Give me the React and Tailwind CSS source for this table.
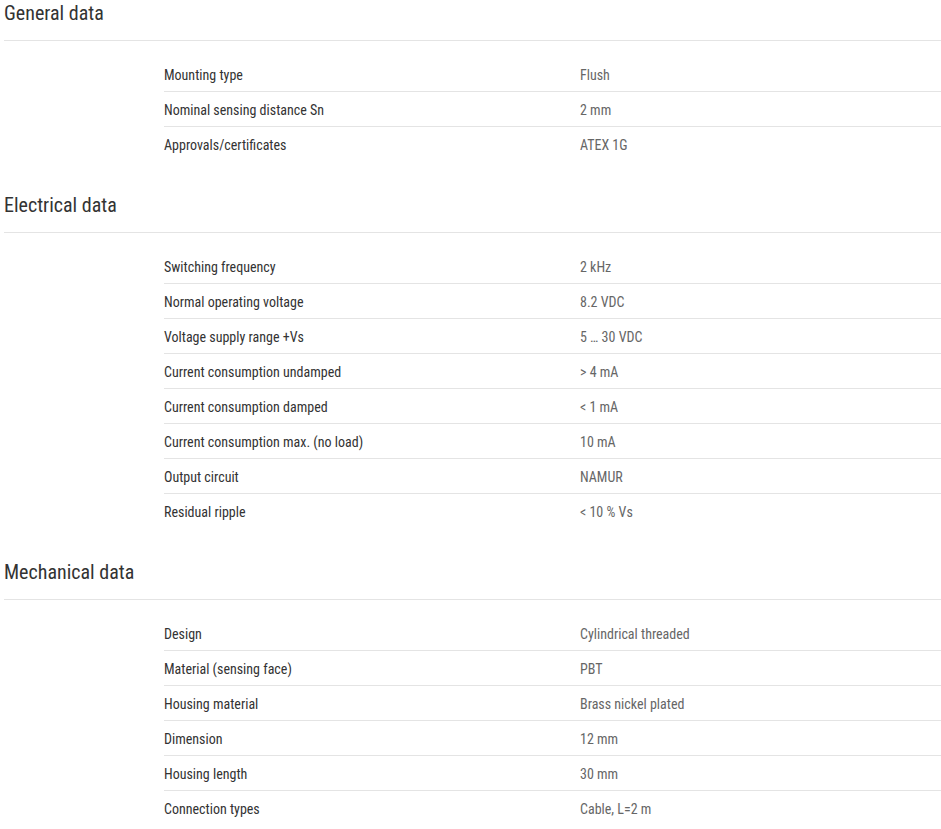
import React from 'react';

const sections = [
  {
    title: 'General data',
    rows: [
      ['Mounting type', 'Flush'],
      ['Nominal sensing distance Sn', '2 mm'],
      ['Approvals/certificates', 'ATEX 1G'],
    ],
  },
  {
    title: 'Electrical data',
    rows: [
      ['Switching frequency', '2 kHz'],
      ['Normal operating voltage', '8.2 VDC'],
      ['Voltage supply range +Vs', '5 … 30 VDC'],
      ['Current consumption undamped', '> 4 mA'],
      ['Current consumption damped', '< 1 mA'],
      ['Current consumption max. (no load)', '10 mA'],
      ['Output circuit', 'NAMUR'],
      ['Residual ripple', '< 10 % Vs'],
    ],
  },
  {
    title: 'Mechanical data',
    rows: [
      ['Design', 'Cylindrical threaded'],
      ['Material (sensing face)', 'PBT'],
      ['Housing material', 'Brass nickel plated'],
      ['Dimension', '12 mm'],
      ['Housing length', '30 mm'],
      ['Connection types', 'Cable, L=2 m'],
    ],
  },
];

function Section({ title, rows }) {
  return (
    <section className="mb-[30px]">
      <h2 className="text-[20px] leading-[26px] text-[#333] font-normal pb-[14px] border-b border-[#e4e4e4]">
        {title}
      </h2>
      <div className="mt-[16px] pl-[160px]">
        {rows.map(([label, value], i) => (
          <div
            key={label}
            className={
              'grid grid-cols-[416px_1fr] h-[35px] pt-[2px] items-center text-[14px] ' +
              (i < rows.length - 1 ? 'border-b border-[#e4e4e4]' : '')
            }
          >
            <span className="text-[#333]">{label}</span>
            <span className="text-[#666]">{value}</span>
          </div>
        ))}
      </div>
    </section>
  );
}

export default function App() {
  return (
    <div className="min-h-screen bg-white pl-1 font-['Roboto',sans-serif] font-stretch-[87.5%]">
      {sections.map((s) => (
        <Section key={s.title} {...s} />
      ))}
    </div>
  );
}
